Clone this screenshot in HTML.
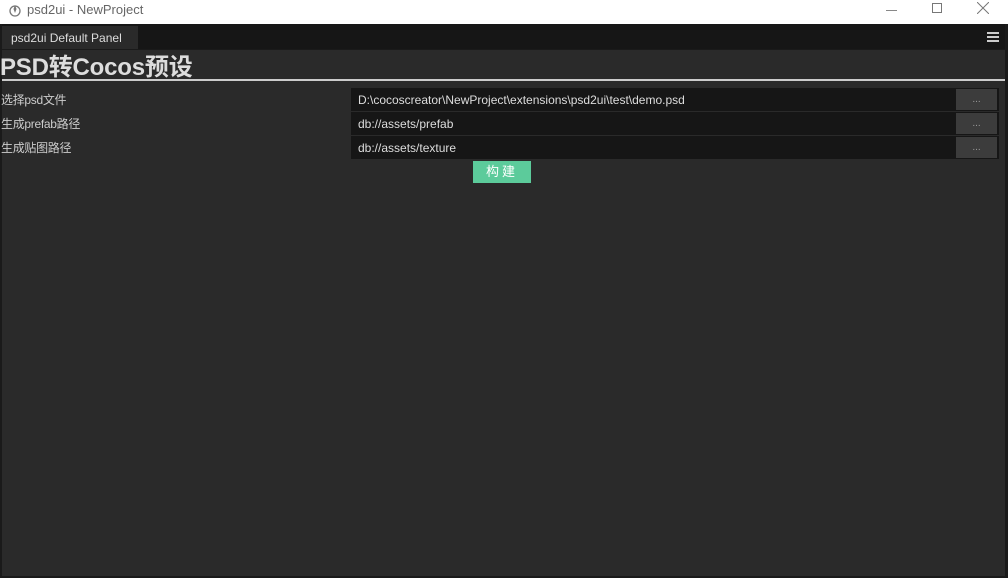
<!DOCTYPE html>
<html><head><meta charset="utf-8"><style>
*{margin:0;padding:0;box-sizing:border-box}
body{width:1008px;height:578px;background:#fff;font-family:"Liberation Sans","Noto Sans CJK SC",sans-serif;overflow:hidden;position:relative}
.tb{position:absolute;left:0;top:0;width:1008px;height:24px;background:#fff;color:#666;font-size:13px}
.win{position:absolute;left:0;top:24px;width:1008px;height:554px;background:#1a1a1a}
.panel{position:absolute;left:2px;top:50px;width:1003px;height:526px;background:#2a2a2a}
.tabbar{position:absolute;left:2px;top:24px;width:1003px;height:25px;background:#161616}
.tab{position:absolute;left:0;top:2px;width:136px;height:23px;background:#2a2a2a;color:#ddd;font-size:12px;padding:5px 0 0 9px}
.abs{position:absolute}
.lbl{position:absolute;left:1px;color:#ccc;font-size:12px;letter-spacing:-0.3px}
.inp{position:absolute;left:351px;width:648px;height:23px;background:#161616;color:#ddd;font-size:12px;padding:5px 0 0 7px}
.btn{position:absolute;left:956px;width:41px;height:21px;background:#3c3c3c;color:#999;font-size:10px;text-align:center;line-height:21px}
</style></head><body>
<div class="tb">
<svg class="abs" style="left:8px;top:3px" width="14" height="14" viewBox="0 0 14 14"><circle cx="7" cy="8" r="5" fill="none" stroke="#777" stroke-width="1.3"/><path d="M7 2 L8.5 6 L7 10 L5.5 6Z" fill="#777"/></svg>
<span class="abs" style="left:27px;top:2px">psd2ui - NewProject</span>
<div class="abs" style="left:886px;top:10px;width:11px;height:1px;background:#888"></div>
<div class="abs" style="left:932px;top:3px;width:10px;height:10px;border:1px solid #777"></div>
<svg class="abs" style="left:977px;top:2px" width="12" height="12"><path d="M0 0L12 12M12 0L0 12" stroke="#777" stroke-width="1"/></svg>
</div>
<div class="win"></div>
<div class="tabbar"><div class="tab">psd2ui Default Panel</div>
<div class="abs" style="left:985px;top:8px;width:12px;height:2px;background:#ccc;box-shadow:0 4px 0 #ccc,0 8px 0 #ccc"></div></div>
<div class="panel"></div>
<div class="abs" style="left:0px;top:47px;color:#ddd;font-size:24px;font-weight:bold;letter-spacing:-0.2px">PSD转Cocos预设</div>
<div class="abs" style="left:2px;top:79px;width:1003px;height:2px;background:#ccc"></div>
<div class="lbl" style="top:91px">选择psd文件</div>
<div class="lbl" style="top:115px">生成prefab路径</div>
<div class="lbl" style="top:139px">生成贴图路径</div>
<div class="inp" style="top:88px">D:\cocoscreator\NewProject\extensions\psd2ui\test\demo.psd</div>
<div class="inp" style="top:112px">db://assets/prefab</div>
<div class="inp" style="top:136px">db://assets/texture</div>
<div class="btn" style="top:89px">...</div>
<div class="btn" style="top:113px">...</div>
<div class="btn" style="top:137px">...</div>
<div class="abs" style="left:473px;top:161px;width:58px;height:22px;background:#5ccb9b;color:#fff;font-size:13px;text-align:center;line-height:22px;letter-spacing:3px">构建</div>
</body></html>
